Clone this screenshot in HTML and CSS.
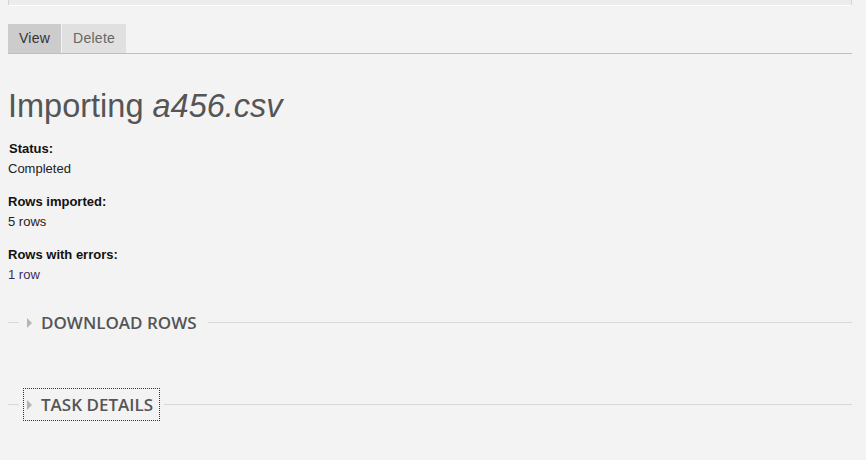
FILE: index.html
```html
<!DOCTYPE html>
<html lang="en">
<head>
<meta charset="utf-8">
<title>Importing a456.csv</title>
<link rel="stylesheet" href="styles.css">
</head>
<body>
  <div class="header-strip"></div>

  <ul class="tabs">
    <li class="tab active"><a href="#">View</a></li>
    <li class="tab"><a href="#">Delete</a></li>
  </ul>

  <h1 class="page-title">Importing <em>a456.csv</em></h1>

  <div class="fields">
    <div class="field">
      <div class="field-label">Status:</div>
      <div class="field-value">Completed</div>
    </div>
    <div class="field">
      <div class="field-label">Rows imported:</div>
      <div class="field-value">5 rows</div>
    </div>
    <div class="field">
      <div class="field-label">Rows with errors:</div>
      <div class="field-value"><a class="value-link" href="#">1 row</a></div>
    </div>
  </div>

  <div class="fieldset collapsed">
    <div class="legend-row">
      <span class="rule lead"></span>
      <a class="toggle" href="#"><span class="arrow"></span><span class="legend-text">DOWNLOAD ROWS</span></a>
      <span class="rule fill"></span>
    </div>
  </div>

  <div class="fieldset collapsed second">
    <div class="legend-row">
      <span class="rule lead"></span>
      <a class="toggle focused" href="#"><span class="arrow"></span><span class="legend-text">TASK DETAILS</span></a>
      <span class="rule fill"></span>
    </div>
  </div>
</body>
</html>
```

FILE: styles.css
```css
html, body {
  background: #f3f3f3;
}

body {
  margin: 0 14px 0 8px;
  font-family: "Liberation Sans", Arial, sans-serif;
  color: #222;
}

/* strip of the region above the tabs */
.header-strip {
  height: 5px;
  background: #ececec;
  border-left: 1px solid #d6d6d6;
  border-right: 1px solid #d6d6d6;
  border-bottom: 1px solid #ffffff;
}

/* primary tabs */
.tabs {
  list-style: none;
  margin: 18px 0 0;
  padding: 0;
  display: flex;
  gap: 1px;
  border-bottom: 1px solid #bdbdbd;
}

.tab a {
  display: block;
  height: 29px;
  line-height: 29px;
  padding: 0 11px;
  font-size: 14px;
  letter-spacing: 0.25px;
  text-decoration: none;
  color: #666;
  background: #e0e0e0;
}

.tab.active a {
  background: #cccccc;
  color: #333;
}

.page-title {
  margin: 33px 0 0;
  font-size: 32.5px;
  line-height: 38px;
  font-weight: normal;
  color: #555;
}

.page-title em {
  font-style: italic;
}

/* label / value pairs */
.fields {
  margin-top: 14px;
  display: flex;
  flex-direction: column;
  gap: 13px;
}

.field {
  font-size: 13px;
  line-height: 20px;
}

.field-label {
  font-weight: bold;
  color: #111;
  padding-left: 1px;
}

.field + .field .field-label {
  padding-left: 0;
}

.field-value {
  color: #222;
}

.value-link {
  color: #3f2a5c;
  text-decoration: none;
}

/* collapsible fieldsets */
.fieldset {
  margin-top: 21px;
}

.fieldset.second {
  margin-top: 49px;
}

.legend-row {
  display: flex;
  align-items: center;
}

.rule {
  height: 1px;
  background: #d8d8d8;
}

.rule.lead {
  width: 11px;
  margin-right: 4px;
}

.rule.fill {
  flex: 1;
  margin-left: 4px;
}

.toggle {
  display: flex;
  align-items: center;
  height: 31px;
  padding: 0 6px 0 3px;
  border: 1px solid transparent;
  text-decoration: none;
  color: #555;
}

.toggle.focused {
  border: 1px dotted #333;
}

.arrow {
  width: 0;
  height: 0;
  border-left: 5px solid #b5b5b5;
  border-top: 5px solid transparent;
  border-bottom: 5px solid transparent;
  margin-right: 9px;
}

.legend-text {
  font-family: "Open Sans", "DejaVu Sans", sans-serif;
  font-weight: 600;
  font-size: 17px;
  line-height: 31px;
}
```
